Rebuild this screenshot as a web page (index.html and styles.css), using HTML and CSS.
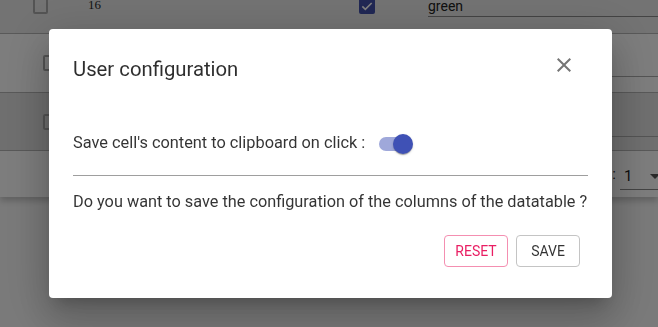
FILE: index.html
```html
<!DOCTYPE html>
<html lang="en">
<head>
<meta charset="utf-8">
<title>User configuration</title>
<link rel="stylesheet" href="styles.css">
</head>
<body>
<div class="table">
  <div class="row row-first">
    <span class="cb cb-first"></span>
    <span class="cell-num">16</span>
    <span class="cb cb-checked"><svg viewBox="0 0 24 24" width="16" height="16"><path d="M5 12.5l4.5 4.5L19 7.5" fill="none" stroke="#fff" stroke-width="2.4"/></svg></span>
    <span class="cell-input">green</span>
  </div>
  <div class="row row-second">
    <span class="cb cb-row"></span>
    <span class="cell-line"></span>
  </div>
  <div class="row row-third">
    <span class="cb cb-row"></span>
    <span class="cell-line"></span>
  </div>
  <div class="footer">
    <span class="pager-label">Page :</span>
    <span class="pager-select">1<span class="caret"></span></span>
  </div>
</div>

<div class="overlay">
  <div class="dialog" role="dialog">
    <div class="dialog-title">
      <h2 class="title-text">User configuration</h2>
      <button class="close-btn" aria-label="close">
        <svg viewBox="0 0 24 24" width="24" height="24"><path d="M19 6.41L17.59 5 12 10.59 6.41 5 5 6.41 10.59 12 5 17.59 6.41 19 12 13.41 17.59 19 19 17.59 13.41 12z" fill="#757575"/></svg>
      </button>
    </div>
    <div class="dialog-content">
      <div class="option-row">
        <span class="option-label">Save cell's content to clipboard on click :</span>
        <span class="switch"><span class="track"></span><span class="thumb"></span></span>
      </div>
      <hr class="divider">
      <p class="question">Do you want to save the configuration of the columns of the datatable ?</p>
    </div>
    <div class="dialog-actions">
      <button class="btn btn-reset">Reset</button>
      <button class="btn btn-save">Save</button>
    </div>
  </div>
</div>
</body>
</html>
```

FILE: styles.css
```css
* { box-sizing: border-box; }
html, body { margin: 0; height: 100%; }
body {
  background: #f4f4f4;
  font-family: Roboto, "Liberation Sans", sans-serif;
  color: rgba(0,0,0,0.87);
  overflow: hidden;
}

.table { margin-top: -17px; }
.row {
  display: flex;
  align-items: center;
  border-bottom: 1px solid #b2b2b2;
  position: relative;
}
.row-first { height: 51px; padding-bottom: 7px; background: #e6e6e6; }
.row-second { height: 59px; background: #fbfbfb; }
.row-third { height: 58px; background: #dedede; }

.cb {
  display: inline-block;
  width: 15px; height: 16px;
  border: 2px solid #a8a8a8;
  border-radius: 2px;
  flex: none;
}
.cb-first { margin-left: 33px; margin-top: 2px; }
.cb-row { margin-left: 43px; }
.cb-checked {
  margin-left: 258px;
  margin-top: 2px;
  width: 16px;
  background: #414fa8;
  border: none;
  display: flex; align-items: center; justify-content: center;
}
.cell-num { margin-left: 40px; font-size: 13px; font-family: "Liberation Serif", serif; color: #2a2a2a; }
.cell-input {
  margin-left: 53px;
  flex: 1;
  font-size: 14px;
  color: #222;
  border-bottom: 1px solid #888;
  padding-bottom: 2px;
  margin-top: 5px;
  line-height: 16px;
}
.cell-line {
  margin-left: auto;
  width: 120px;
  height: 1px;
  background: #a8a8a8;
  align-self: flex-end;
  margin-bottom: 15px;
}
.row-third .cell-line { margin-bottom: 13px; }

.footer {
  height: 46px;
  background: #fbfbfb;
  display: flex;
  align-items: center;
  justify-content: flex-end;
  box-shadow: 0 4px 6px rgba(0,0,0,0.2);
  font-size: 15px;
  color: #222;
}
.pager-label { margin-right: 4px; }
.pager-select {
  width: 38px;
  border-bottom: 1px solid #888;
  padding: 6px 0 5px 4px;
  margin-top: 4px;
  position: relative;
  line-height: 16px;
}
.caret {
  position: absolute;
  right: -2px; top: 12px;
  border-left: 5px solid transparent;
  border-right: 5px solid transparent;
  border-top: 5px solid #555;
}

.overlay {
  position: fixed;
  inset: 0;
  background: rgba(0,0,0,0.5);
  display: flex;
  align-items: center;
  justify-content: center;
  padding-left: 3px;
}
.dialog {
  width: 563px;
  height: 269px;
  background: #fff;
  border-radius: 4px;
  box-shadow: 0 11px 15px -7px rgba(0,0,0,0.2), 0 24px 38px 3px rgba(0,0,0,0.14), 0 9px 46px 8px rgba(0,0,0,0.12);
  display: flex;
  flex-direction: column;
}
.dialog-title {
  display: flex;
  justify-content: space-between;
  align-items: flex-start;
  padding: 12px 24px 0 24px;
  height: 71px;
}
.title-text {
  margin: 12px 0 0;
  font-size: 20.3px;
  font-weight: 400;
  line-height: 32px;
  color: rgba(0,0,0,0.82);
}
.close-btn {
  width: 48px; height: 48px;
  border: none; background: none; padding: 0;
  display: flex; align-items: center; justify-content: center;
}
.dialog-content { padding: 0 24px; }
.option-row {
  display: flex;
  align-items: center;
  height: 38px;
  margin-top: 23px;
}
.option-label { font-size: 16.35px; color: rgba(0,0,0,0.8); }
.switch {
  position: relative;
  width: 34px; height: 20px;
  margin-left: 14px;
  margin-top: 4px;
}
.track {
  position: absolute;
  left: 0; top: 3px;
  width: 32px; height: 14px;
  border-radius: 7px;
  background: #9fa8da;
}
.thumb {
  position: absolute;
  left: 14px; top: 0;
  width: 20px; height: 20px;
  border-radius: 50%;
  background: #3f51b5;
  box-shadow: 0 2px 1px -1px rgba(0,0,0,0.2), 0 1px 1px 0 rgba(0,0,0,0.14), 0 1px 3px 0 rgba(0,0,0,0.12);
}
.divider {
  margin: 14px 0 0;
  border: none;
  height: 1px;
  background: #9e9e9e;
}
.question {
  margin: 14px 0 0;
  font-size: 16.3px;
  line-height: 24px;
  color: rgba(0,0,0,0.8);
  white-space: nowrap;
}
.dialog-actions {
  display: flex;
  justify-content: flex-end;
  gap: 8px;
  padding: 0 32px 0 0;
  margin-top: 21px;
}
.btn {
  width: 64px; height: 32px;
  border-radius: 4px;
  background: #fff;
  font-family: Roboto, "Liberation Sans", sans-serif;
  font-size: 14px;
  text-transform: uppercase;
  padding: 0;
}
.btn-reset { border: 1px solid #f48fb1; color: #e91e63; }
.btn-save { border: 1px solid #c4c4c4; color: rgba(0,0,0,0.8); }
```
